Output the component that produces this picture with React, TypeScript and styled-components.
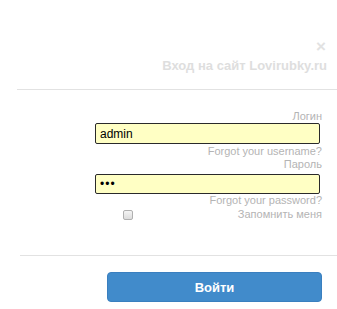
import React from "react";
import styled, { createGlobalStyle } from "styled-components";

const Global = createGlobalStyle`
  html, body { margin: 0; padding: 0; background: #fff; }
  body { font-family: "Liberation Sans", Arial, sans-serif; font-size: 12px; overflow: hidden; }
`;

const Modal = styled.div`
  width: 337px;
  height: 309px;
  display: flex;
  flex-direction: column;
  background: #fff;
`;

const Header = styled.div`
  display: flex;
  flex-direction: column;
  align-items: flex-end;
  padding: 40px 10px 0 0;
`;

const Close = styled.span`
  display: block;
  font-size: 17px;
  line-height: 14px;
  height: 14px;
  font-weight: bold;
  color: #e2e2e2;
  margin-right: 1px;
`;

const Title = styled.h3`
  margin: 4px 0 0 0;
  font-size: 13px;
  line-height: 16px;
  font-weight: bold;
  color: #dedede;
`;

const Rule = styled.div<{ $left: number; $top: number }>`
  height: 1px;
  background: #e2e2e2;
  margin: ${(p) => p.$top}px 0 0 ${(p) => p.$left}px;
`;

const Form = styled.div`
  display: flex;
  flex-direction: column;
  align-items: flex-end;
  padding: 20px 15px 0 95px;
`;

const Label = styled.div<{ $mt?: number }>`
  font-size: 11px;
  line-height: 13px;
  color: #b4b4b4;
  text-align: right;
  white-space: nowrap;
  margin-top: ${(p) => p.$mt ?? 0}px;
`;

const Input = styled.input`
  box-sizing: border-box;
  width: 225px;
  height: 21px;
  margin: 0 2px 0 0;
  padding: 0 4px;
  border: 1px solid #2a2a2a;
  border-radius: 2px;
  background: #ffffc4;
  font-family: "Liberation Sans", Arial, sans-serif;
  font-size: 12px;
  color: #000;
  outline: none;
`;

const PwInput = styled(Input)`
  margin-top: 3px;
  height: 20px;
  letter-spacing: 1px;
`;

const RememberRow = styled.div`
  align-self: stretch;
  display: flex;
  align-items: center;
  justify-content: space-between;
  padding-left: 28px;
  margin-top: 1px;
`;

const Check = styled.input`
  appearance: none;
  -webkit-appearance: none;
  box-sizing: border-box;
  width: 10px;
  height: 10px;
  margin: 0;
  border: 1px solid #b0b0b0;
  border-radius: 2px;
  background: linear-gradient(#f4f4f4, #dcdcdc);
`;

const Footer = styled.div`
  display: flex;
  padding: 16px 0 0 107px;
`;

const Button = styled.button`
  box-sizing: border-box;
  width: 215px;
  height: 30px;
  border: 1px solid #3a7fbf;
  border-radius: 4px;
  background: #418bcb;
  color: #fff;
  font-family: "Liberation Sans", Arial, sans-serif;
  font-size: 13px;
  font-weight: bold;
  cursor: pointer;
`;

export default function App() {
  return (
    <Modal>
      <Global />
      <Header>
        <Close>×</Close>
        <Title>Вход на сайт Lovirubky.ru</Title>
      </Header>
      <Rule $left={17} $top={15} />
      <Form>
        <Label>Логин</Label>
        <Input type="text" defaultValue="admin" />
        <Label $mt={1}>Forgot your username?</Label>
        <Label>Пароль</Label>
        <PwInput type="text" defaultValue="•••" />
        <Label>Forgot your password?</Label>
        <RememberRow>
          <Check type="checkbox" />
          <Label>Запомнить меня</Label>
        </RememberRow>
      </Form>
      <Rule $left={20} $top={34} />
      <Footer>
        <Button>Войти</Button>
      </Footer>
    </Modal>
  );
}
